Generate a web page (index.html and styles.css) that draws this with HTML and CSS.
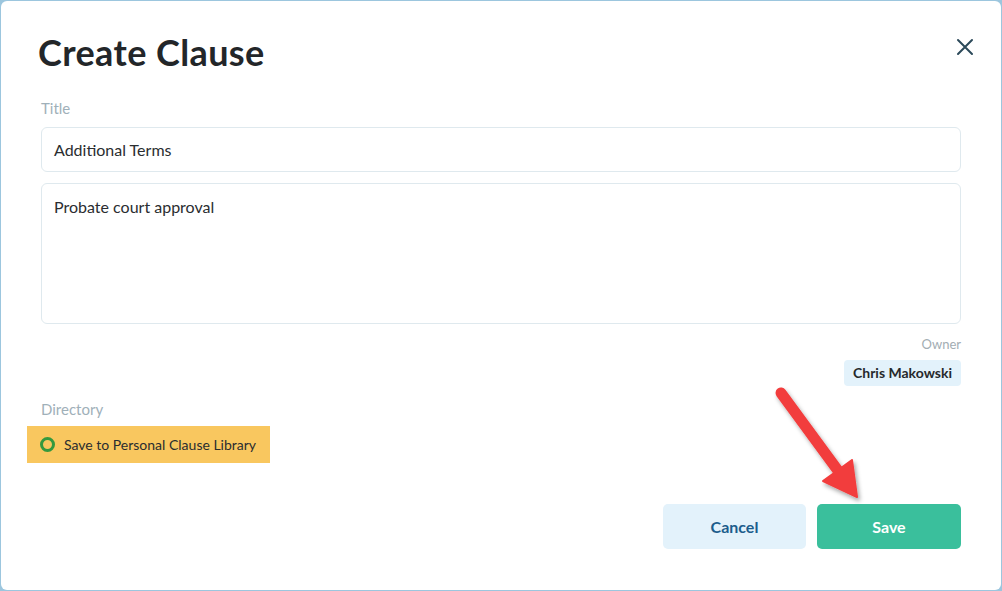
FILE: index.html
```html
<!DOCTYPE html>
<html>
<head>
<meta charset="utf-8">
<link rel="stylesheet" href="styles.css">
</head>
<body>
<div class="modal">
  <div class="header">
    <h1 class="title">Create Clause</h1>
    <button class="close" aria-label="Close">
      <svg width="18" height="18" viewBox="0 0 18 18"><path d="M2 2L16 16M16 2L2 16" stroke="#2c4a5a" stroke-width="2" stroke-linecap="round"/></svg>
    </button>
  </div>
  <div class="label">Title</div>
  <div class="input">Additional Terms</div>
  <div class="textarea">Probate court approval</div>
  <div class="owner">
    <div class="owner-label">Owner</div>
    <div class="chip">Chris Makowski</div>
  </div>
  <div class="label dir">Directory</div>
  <div class="option">
    <span class="radio"></span>
    <span>Save to Personal Clause Library</span>
  </div>
  <div class="actions">
    <button class="btn cancel">Cancel</button>
    <button class="btn save">Save</button>
  </div>
  <svg class="arrow" width="110" height="130" viewBox="0 0 110 130">
    <defs>
      <filter id="sh" x="-20%" y="-20%" width="150%" height="150%">
        <feDropShadow dx="2" dy="3" stdDeviation="2" flood-color="#000" flood-opacity="0.35"/>
      </filter>
    </defs>
    <g filter="url(#sh)" fill="#f23d3d" stroke="#f23d3d">
      <line x1="16" y1="13" x2="74" y2="92" stroke-width="11" stroke-linecap="round"/>
      <polygon points="92,117 87,80 58,101" stroke-width="2" stroke-linejoin="round"/>
    </g>
  </svg>
</div>
</body>
</html>
```
FILE: styles.css
```css
html, body {
  margin: 0;
  padding: 0;
}
body {
  background: #9cc6de;
  width: 1002px;
  height: 591px;
  overflow: hidden;
  font-family: "Lato", "Inter", sans-serif;
  color: #2a2d30;
}
.modal {
  position: relative;
  margin: 1px;
  height: 589px;
  box-sizing: border-box;
  background: #fff;
  border-radius: 6px;
  padding: 0 40px 0 40px;
  display: flex;
  flex-direction: column;
}
.header {
  display: flex;
  justify-content: space-between;
  align-items: flex-start;
  margin-top: 31px;
  margin-left: -3px;
  margin-right: -17px;
}
.title {
  margin: 0;
  font-size: 36px;
  line-height: 40px;
  font-weight: 700;
  color: #232629;
  letter-spacing: 0.4px;
}
.close {
  background: none;
  border: 0;
  padding: 0;
  margin-top: 2px;
  width: 26px;
  height: 26px;
  display: flex;
  align-items: center;
  justify-content: center;
}
.label {
  margin-top: 26px;
  font-size: 15px;
  line-height: 20px;
  color: #9fb0b9;
}
.input, .textarea {
  border: 1px solid #dfe9ee;
  border-radius: 6px;
  font-size: 16px;
  color: #2a2d30;
  padding: 0 12px;
}
.input {
  margin-top: 9px;
  height: 43px;
  line-height: 43px;
}
.textarea {
  margin-top: 11px;
  padding-top: 13px;
  box-sizing: border-box;
  height: 141px;
  line-height: 20px;
}
.owner {
  display: flex;
  flex-direction: column;
  align-items: flex-end;
}
.owner-label {
  margin-top: 12px;
  font-size: 13px;
  line-height: 16px;
  color: #a3adb3;
}
.chip {
  margin-top: 8px;
  height: 26px;
  line-height: 26px;
  padding: 0 9px;
  border-radius: 4px;
  background: #e3f2fb;
  font-size: 14px;
  font-weight: 700;
  color: #26292c;
}
.label.dir {
  margin-top: 13px;
}
.option {
  margin-top: 7px;
  margin-left: -14px;
  align-self: flex-start;
  height: 37px;
  background: #f9c75f;
  display: flex;
  align-items: center;
  gap: 9px;
  padding: 0 14px 0 13px;
  font-size: 14px;
  color: #2a2d30;
}
.radio {
  width: 9px;
  height: 9px;
  border: 3px solid #35993e;
  border-radius: 50%;
  background: #f9c75f;
}
.actions {
  margin-top: 41px;
  display: flex;
  justify-content: flex-end;
  gap: 11px;
}
.btn {
  height: 45px;
  width: 144px;
  border: 0;
  border-radius: 5px;
  font-family: inherit;
  font-size: 16px;
  font-weight: 700;
}
.btn.cancel {
  width: 143px;
  background: #e3f2fb;
  color: #1c5d8c;
}
.save {
  background: #3abf9c;
  color: #fff;
}
.arrow {
  position: absolute;
  left: 764px;
  top: 379px;
}
```
